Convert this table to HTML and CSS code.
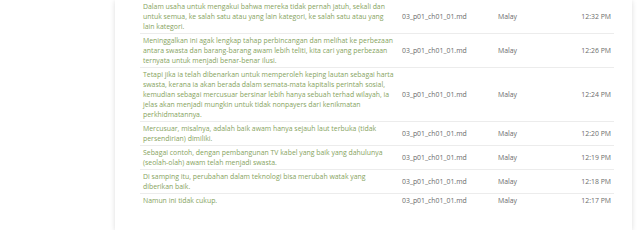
FILE: index.html
```html
<!DOCTYPE html>
<html>
<head>
<meta charset="utf-8">
<link rel="stylesheet" href="styles.css">
</head>
<body>
<div class="page">
  <div class="card">
    <table class="log">
      <colgroup>
        <col class="c-text"><col class="c-file"><col class="c-lang"><col class="c-time">
      </colgroup>
      <tbody>
        <tr><td class="txt">Dalam usaha untuk mengakui bahwa mereka tidak pernah jatuh, sekali dan untuk semua, ke salah satu atau yang lain kategori, ke salah satu atau yang lain kategori.</td><td>03_p01_ch01_01.md</td><td>Malay</td><td class="time">12:32 PM</td></tr>
        <tr><td class="txt">Meninggalkan ini agak lengkap tahap perbincangan dan melihat ke perbezaan antara swasta dan barang-barang awam lebih teliti, kita cari yang perbezaan ternyata untuk menjadi benar-benar ilusi.</td><td>03_p01_ch01_01.md</td><td>Malay</td><td class="time">12:26 PM</td></tr>
        <tr><td class="txt">Tetapi jika ia telah dibenarkan untuk memperoleh keping lautan sebagai harta swasta, kerana ia akan berada dalam semata-mata kapitalis perintah sosial, kemudian sebagai mercusuar bersinar lebih hanya sebuah terhad wilayah, ia jelas akan menjadi mungkin untuk tidak nonpayers dari kenikmatan perkhidmatannya.</td><td>03_p01_ch01_01.md</td><td>Malay</td><td class="time">12:24 PM</td></tr>
        <tr><td class="txt">Mercusuar, misalnya, adalah baik awam hanya sejauh laut terbuka (tidak persendirian) dimiliki.</td><td>03_p01_ch01_01.md</td><td>Malay</td><td class="time">12:20 PM</td></tr>
        <tr><td class="txt">Sebagai contoh, dengan pembangunan TV kabel yang baik yang dahulunya (seolah-olah) awam telah menjadi swasta.</td><td>03_p01_ch01_01.md</td><td>Malay</td><td class="time">12:19 PM</td></tr>
        <tr><td class="txt">Di samping itu, perubahan dalam teknologi bisa merubah watak yang diberikan baik.</td><td>03_p01_ch01_01.md</td><td>Malay</td><td class="time">12:18 PM</td></tr>
        <tr class="last"><td class="txt">Namun ini tidak cukup.</td><td>03_p01_ch01_01.md</td><td>Malay</td><td class="time">12:17 PM</td></tr>
      </tbody>
    </table>
  </div>
</div>
</body>
</html>
```
FILE: styles.css
```css
html, body {
  margin: 0;
  padding: 0;
  background: #ffffff;
}
.page {
  padding: 0 8px 0 115px;
  font-family: "Open Sans", "Liberation Sans", sans-serif;
}
.card {
  width: 517px;
  background: #fff;
  box-shadow: 0 1px 5px rgba(0, 0, 0, 0.14);
  padding: 0 18px 23px 25px;
  box-sizing: border-box;
}
.log {
  width: 100%;
  border-collapse: collapse;
  table-layout: fixed;
  font-size: 6.9px;
  line-height: 10px;
  color: #6b6b6b;
}
.c-text { width: 259px; }
.c-file { width: 96px; }
.c-lang { width: 70px; }
.c-time { width: auto; }
.log td {
  padding: 1.5px 3px;
  vertical-align: middle;
  border-bottom: 1px solid #ececec;
}
.log tr.last td {
  border-bottom: none;
}
.log td.txt {
  color: #86a35e;
}
.log td.time {
  text-align: right;
}
```
